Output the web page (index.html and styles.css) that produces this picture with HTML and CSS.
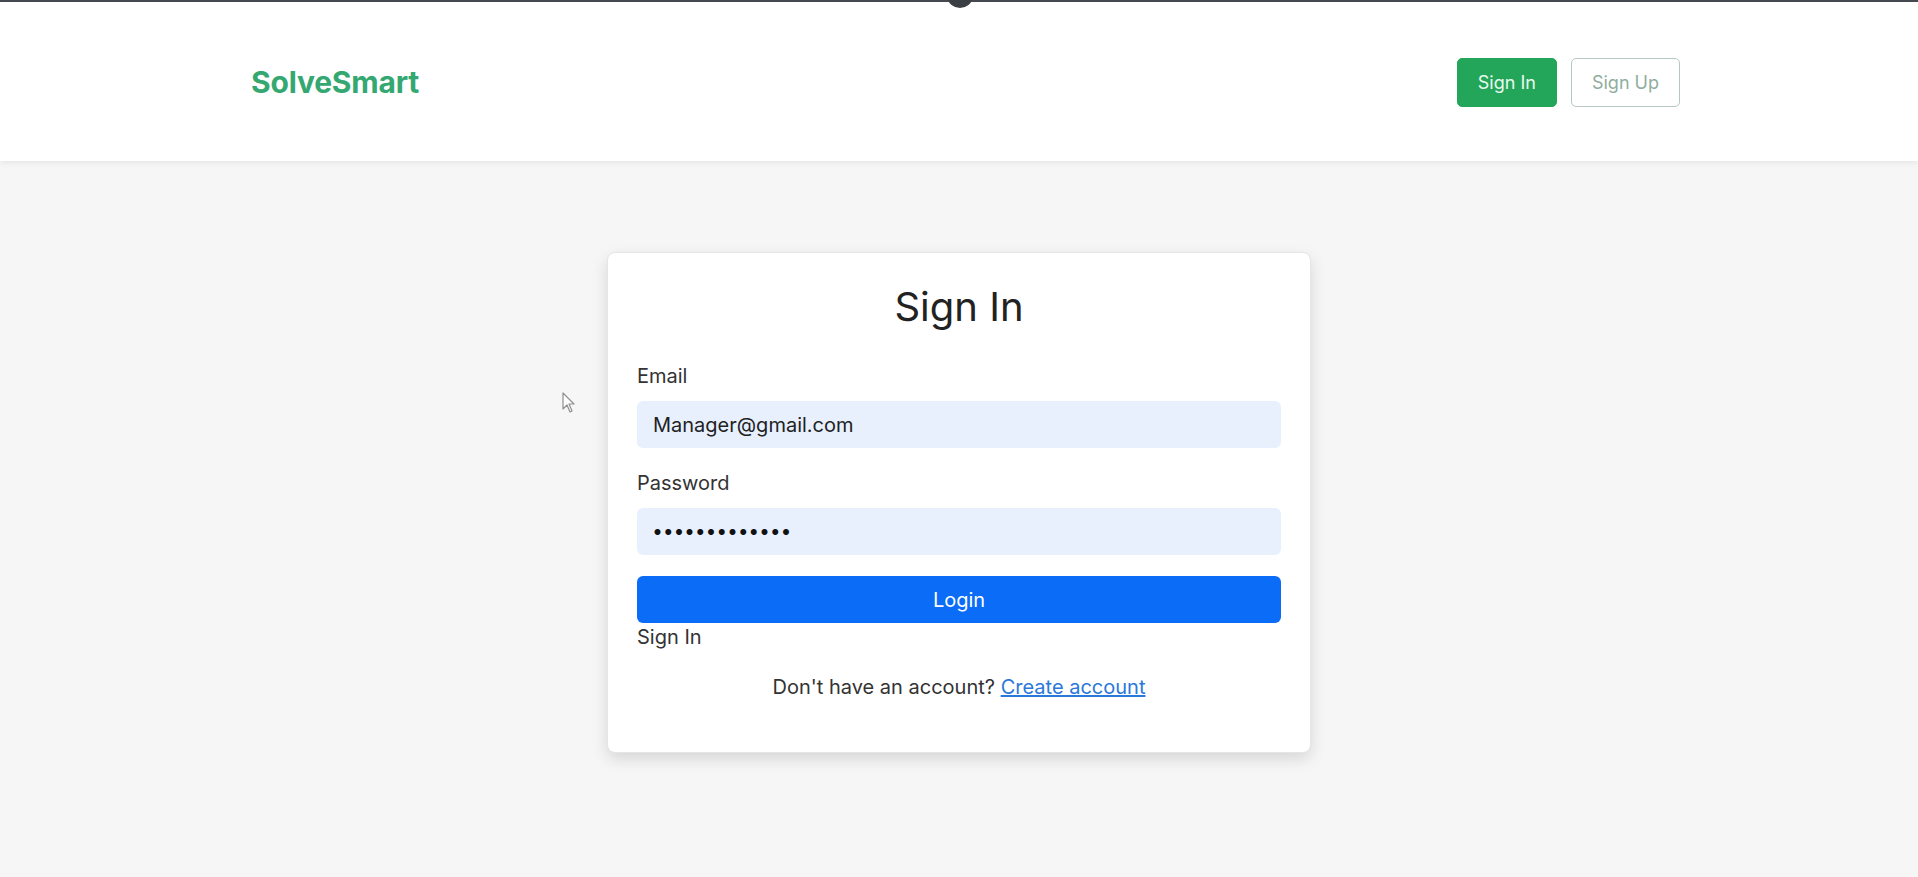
FILE: index.html
```html
<!DOCTYPE html>
<html lang="en">
<head>
<meta charset="utf-8">
<title>SolveSmart - Sign In</title>
<link rel="stylesheet" href="styles.css">
</head>
<body>
<div class="topline"></div>
<div class="topnotch"></div>
<header class="header">
  <a class="brand" href="#">SolveSmart</a>
  <nav class="nav-actions">
    <a class="btn btn-success" href="#">Sign In</a>
    <a class="btn btn-outline" href="#">Sign Up</a>
  </nav>
</header>
<main class="main">
  <section class="card">
    <h1 class="card-title">Sign In</h1>
    <form class="form">
      <label class="form-label" for="email">Email</label>
      <input class="form-input" id="email" type="email" value="Manager@gmail.com">
      <label class="form-label" for="password">Password</label>
      <input class="form-input pw" id="password" type="password" value="manager123456">
      <button class="btn-login" type="button">Login</button>
    </form>
    <div class="under">Sign In</div>
    <p class="switch">Don't have an account? <a href="#" class="link">Create account</a></p>
  </section>
</main>
<svg class="cursor" width="14" height="22" viewBox="0 0 14 22"><path d="M1 1 L1 17 L5 13 L8 20 L10 19 L7 12 L12 12 Z" fill="#fff" stroke="#777" stroke-width="1.2" stroke-linejoin="round"/></svg>
</body>
</html>
```
FILE: styles.css
```css
* { box-sizing: border-box; }
html, body { margin: 0; padding: 0; }
body {
  background: #f5f6f5;
  font-family: Inter, "Noto Sans", "Liberation Sans", sans-serif;
  color: #222;
  height: 877px;
  overflow: hidden;
  position: relative;
}
.topline {
  height: 2px;
  background: #454b50;
}
.topnotch {
  position: absolute;
  top: -12px;
  left: 948px;
  width: 24px;
  height: 20px;
  border-radius: 50%;
  background: #3b3f44;
  z-index: 5;
}
.header {
  height: 159px;
  background: #fff;
  display: flex;
  align-items: center;
  justify-content: space-between;
  padding: 0 238px 0 251px;
  box-shadow: 0 2px 6px rgba(0,0,0,0.07);
  position: relative;
}
.brand {
  font-size: 30px;
  font-weight: 700;
  color: #35a872;
  text-decoration: none;
  letter-spacing: -0.2px;
}
.nav-actions {
  display: flex;
  gap: 14px;
  margin-top: 2px;
}
.btn {
  display: flex;
  align-items: center;
  justify-content: center;
  height: 49px;
  padding: 0 20px;
  font-size: 18px;
  border-radius: 5px;
  text-decoration: none;
  white-space: nowrap;
}
.btn-success {
  background: #23a55a;
  color: #e9fbef;
  border: 1px solid #23a55a;
}
.btn-outline {
  background: #fff;
  color: #8fae9f;
  border: 1px solid #b7c9bf;
}
.main {
  display: flex;
  justify-content: center;
  padding-top: 91px;
}
.card {
  width: 704px;
  background: #fff;
  border: 1px solid #e4e6e5;
  border-radius: 8px;
  box-shadow: 0 6px 16px rgba(0,0,0,0.13);
  padding: 30px 29px 50px 29px;
}
.card-title {
  margin: 0;
  text-align: center;
  font-size: 40px;
  font-weight: 400;
  line-height: 47px;
  color: #222;
}
.form {
  display: flex;
  flex-direction: column;
  margin-top: 32px;
}
.form-label {
  font-size: 20px;
  line-height: 29px;
  color: #333;
  margin-bottom: 10px;
}
.form-input {
  height: 47px;
  border: none;
  outline: none;
  background: #e8f0fe;
  border-radius: 6px;
  padding: 0 16px;
  font-family: inherit;
  font-size: 20px;
  color: #222;
  margin-bottom: 21px;
}
.form-input.pw {
  font-size: 19px;
  letter-spacing: 1.7px;
  color: #111;
  font-weight: 700;
}
.btn-login {
  height: 47px;
  border: none;
  border-radius: 6px;
  background: #0a6cf7;
  color: #fff;
  font-family: inherit;
  font-size: 20px;
  margin-top: 0;
}
.under {
  font-size: 20px;
  line-height: 29px;
  color: #333;
}
.switch {
  margin: 21px 0 0;
  text-align: center;
  font-size: 20px;
  line-height: 29px;
  color: #333;
}
.link {
  color: #2a78d9;
  text-decoration: underline;
}
.cursor {
  position: absolute;
  left: 562px;
  top: 392px;
  opacity: 0.8;
}
```
